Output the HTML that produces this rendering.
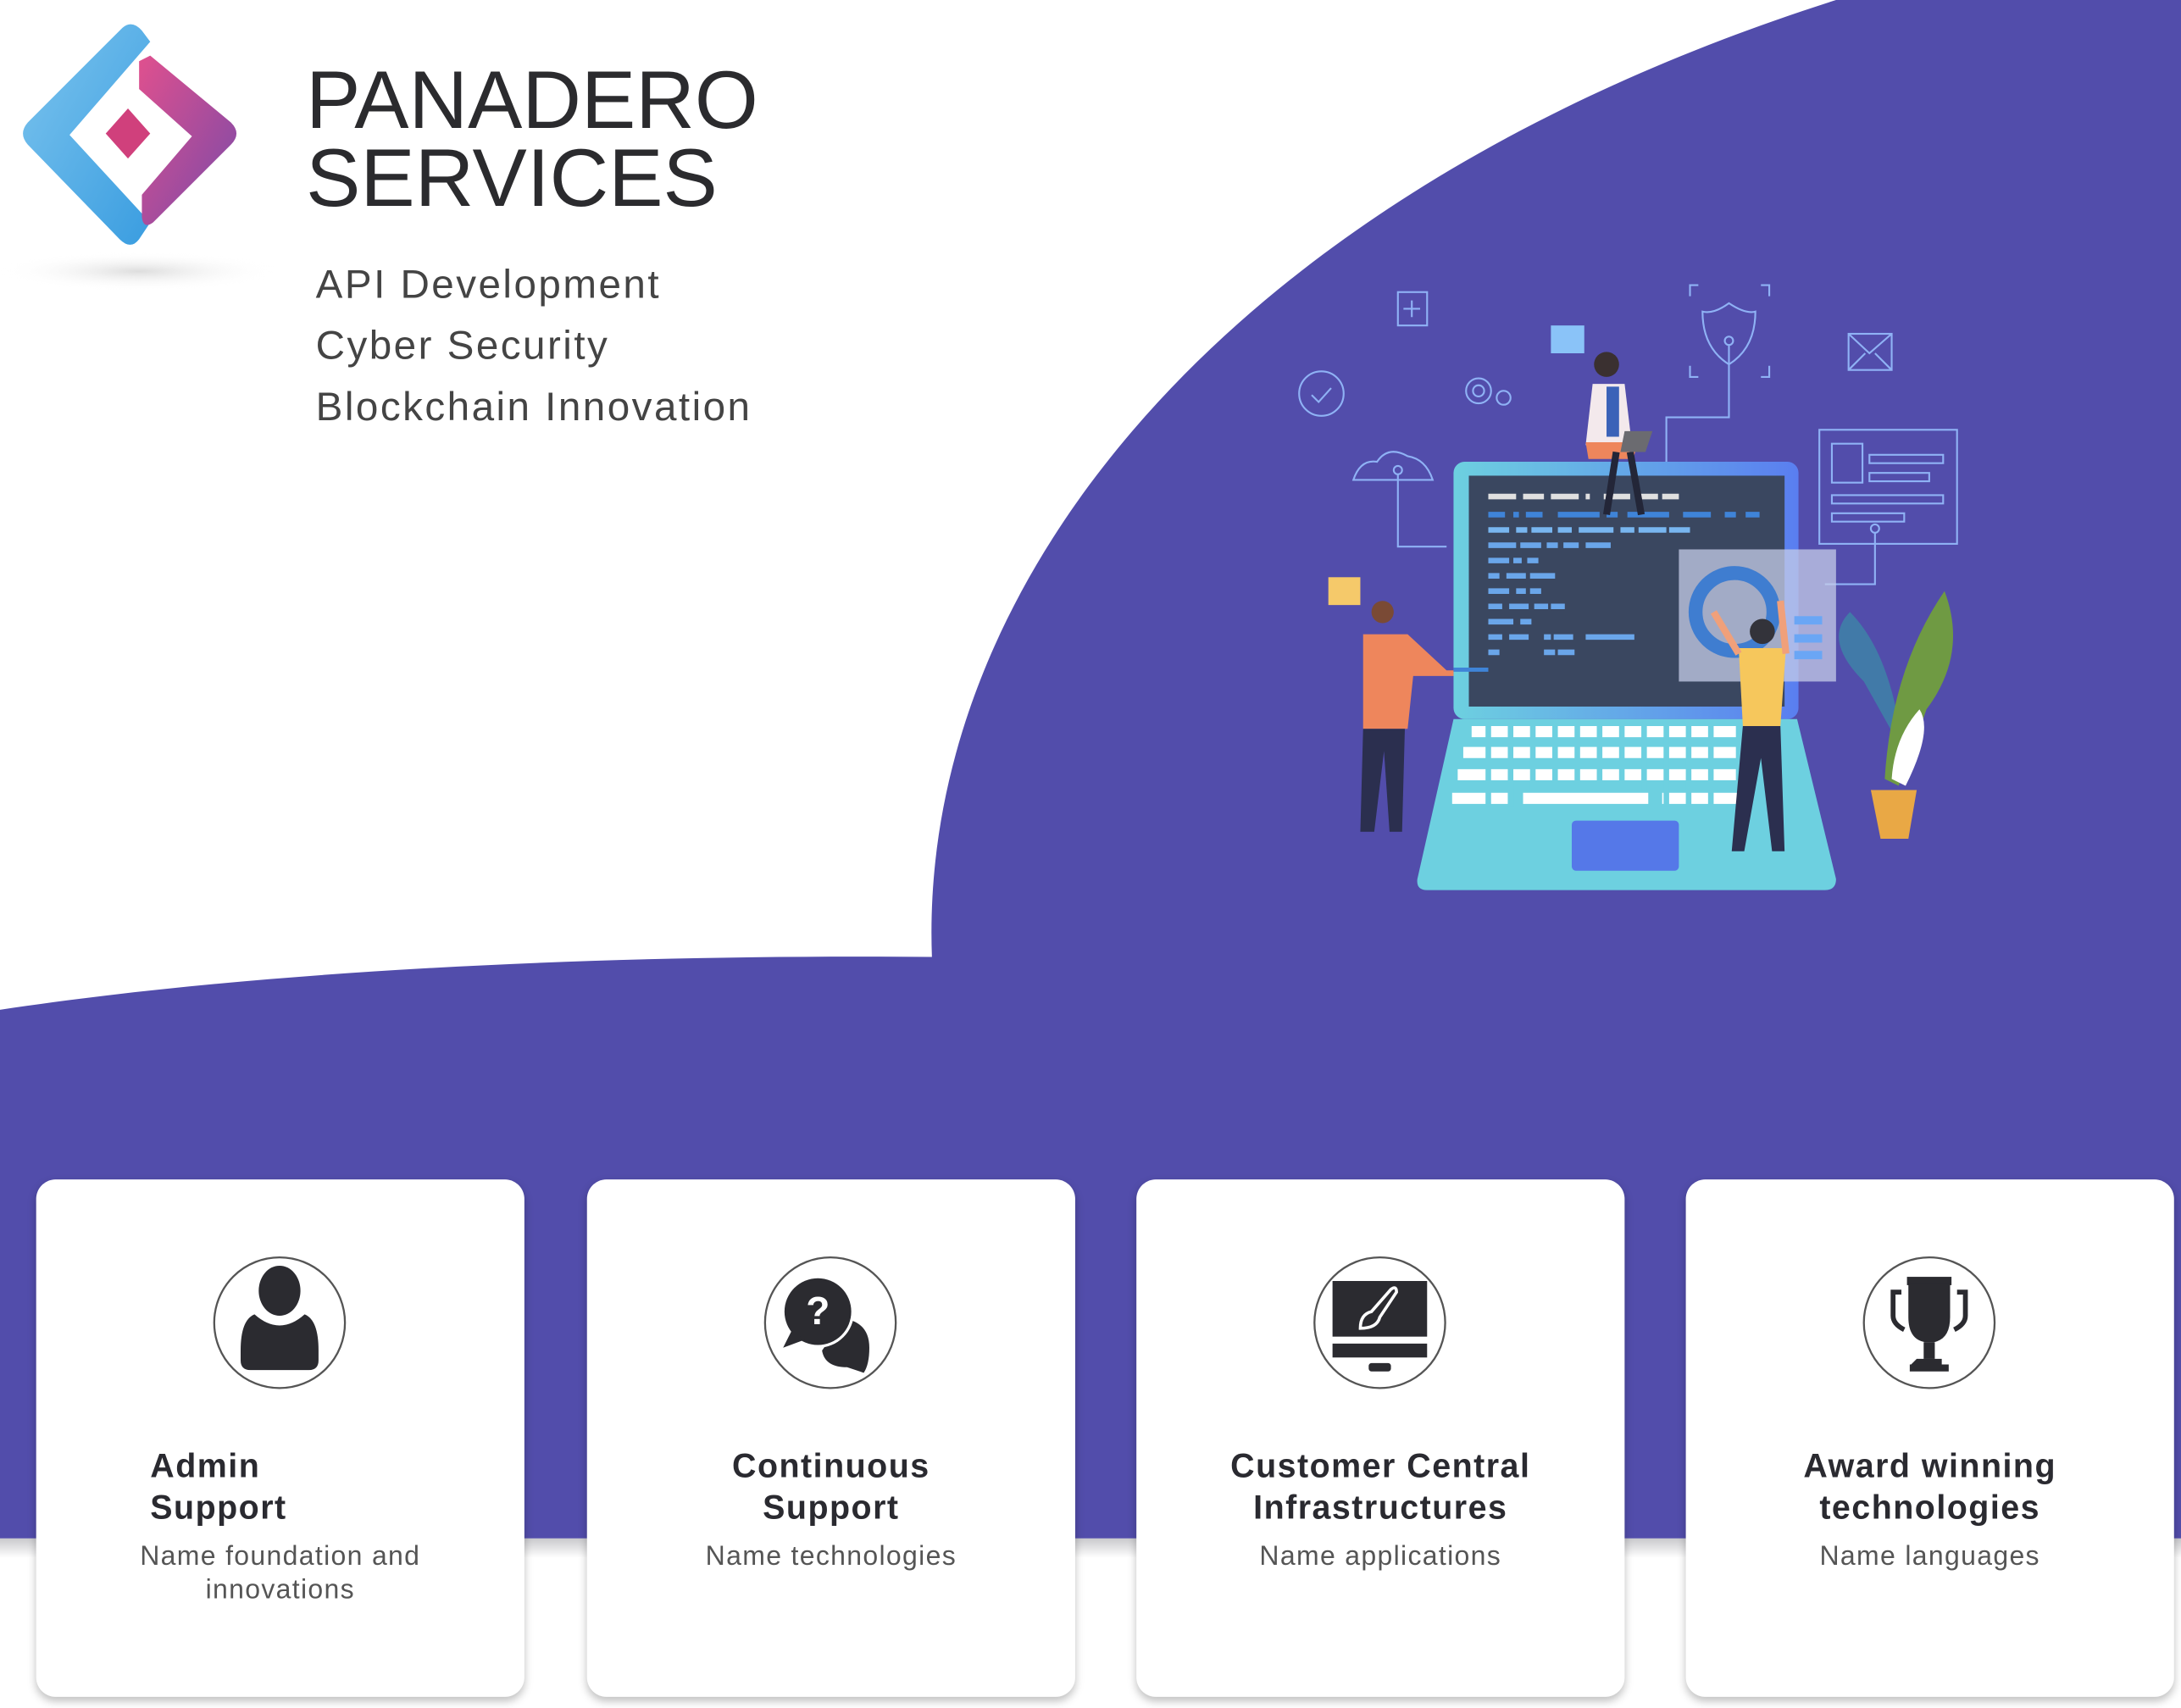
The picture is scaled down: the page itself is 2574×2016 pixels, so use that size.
<!DOCTYPE html>
<html><head><meta charset="utf-8"><style>
html,body{margin:0;padding:0;width:2574px;height:2016px;overflow:hidden;background:#fff;}
#w{position:absolute;left:0;top:0;width:1568px;height:1228px;transform:scale(1.64158,1.64169);transform-origin:0 0;font-family:"Liberation Sans",sans-serif;}
.card{position:absolute;top:848px;width:351px;height:372px;background:#fff;border-radius:14px;box-shadow:0 3px 6px rgba(0,0,0,.25);}
.card svg{position:absolute;left:127px;top:55px;}
.t{position:absolute;left:0;right:0;top:192px;text-align:center;font-weight:bold;font-size:24px;line-height:30px;color:#2a2a30;letter-spacing:0.9px;}
.s{position:absolute;left:0;right:0;top:259px;text-align:center;font-size:19.5px;line-height:24px;color:#555;letter-spacing:0.8px;}
.svc{position:absolute;left:227px;font-size:29px;color:#444;letter-spacing:1.5px;}
</style></head><body><div id="w">
<svg width="1568" height="1228" style="position:absolute;left:0;top:0">
<defs>
<linearGradient id="sh" x1="0" y1="0" x2="0" y2="1"><stop offset="0" stop-color="#c9c9cc"/><stop offset="1" stop-color="#fff"/></linearGradient>
<linearGradient id="bl" x1="0" y1="0" x2="1" y2="1"><stop offset="0" stop-color="#7cc4ee"/><stop offset="1" stop-color="#3a9de0"/></linearGradient>
<linearGradient id="pk" x1="0" y1="0" x2="1" y2="1"><stop offset="0" stop-color="#e0508e"/><stop offset="1" stop-color="#7a4aa8"/></linearGradient>
<linearGradient id="bz" x1="0" y1="0" x2="1" y2="0"><stop offset="0" stop-color="#6dd0e0"/><stop offset="1" stop-color="#5a7ef0"/></linearGradient>
<radialGradient id="ls" cx="0.5" cy="0.5" r="0.5"><stop offset="0" stop-color="#ddd"/><stop offset="1" stop-color="#fff" stop-opacity="0"/></radialGradient>
</defs>
<rect x="0" y="1106" width="1568" height="14" fill="url(#sh)"/>
<path d="M1320,0 H1568 V1106 H0 V726 C200,696 450,686 670,688 C660,420 880,140 1320,0 Z" fill="#524dab"/>
<ellipse cx="100" cy="195" rx="100" ry="14" fill="url(#ls)"/>
<path d="M88,20 Q95,14 102,22 L108,30 L50,97 L108,160 L100,172 Q94,180 86,172 L20,104 Q13,96 20,88 Z" fill="url(#bl)"/>
<path d="M100,44 L108,40 L166,88 Q174,96 166,104 L110,160 Q103,165 102,156 L102,140 L138,98 L100,64 Z" fill="url(#pk)"/>
<path d="M92,78 L108,96 L92,114 L76,96 Z" fill="#d0407c"/>
<g fill="none" stroke="#8fb2f5" stroke-width="1.3">
<rect x="1005" y="210" width="21" height="24"/><path d="M1015,216v12M1009,222h12"/>
<circle cx="950" cy="283" r="16"/><path d="M943,284l5,5 9,-10"/>
<circle cx="1063" cy="281" r="9"/><circle cx="1063" cy="281" r="4"/><circle cx="1081" cy="286" r="5"/>
<path d="M1215,213v-8h6M1272,213v-8h-6M1215,263v8h6M1272,263v8h-6"/>
<path d="M1243,218 Q1255,226 1262,224 Q1262,250 1243,262 Q1224,250 1224,224 Q1232,226 1243,218Z"/>
<circle cx="1243" cy="245" r="3"/><path d="M1243,248v52h-45v33"/>
<rect x="1329" y="240" width="31" height="26"/><path d="M1329,240l15,14 16,-14M1329,266l12,-12M1360,266l-12,-12"/>
<path d="M973,345 Q978,330 990,332 Q998,320 1012,328 Q1025,330 1030,345 Z"/><circle cx="1005" cy="338" r="3"/><path d="M1005,341v52h35"/>
<rect x="1308" y="309" width="99" height="82"/><rect x="1317" y="319" width="22" height="28"/><path d="M1344,327h53v6h-53zM1344,340h43v6h-43zM1317,356h80v6h-80zM1317,369h52v6h-52z"/>
<circle cx="1348" cy="380" r="3"/><path d="M1348,383v37h-36"/>
</g>
<rect x="1115" y="234" width="24" height="20" fill="#8ac3f8"/>
<rect x="955" y="415" width="23" height="20" fill="#f5c96a"/>
<rect x="1045" y="332" width="248" height="185" rx="8" fill="url(#bz)"/>
<rect x="1056" y="342" width="227" height="166" fill="#3a4760"/>
<g stroke-width="4">
<path d="M1070,357h20M1095,357h15M1115,357h20M1140,357h3M1153,357h19M1177,357h15M1195,357h12" stroke="#e0e0e0"/>
<path d="M1070,370h12M1088,370h4M1097,370h12M1120,370h30M1155,370h8M1170,370h30M1210,370h20M1240,370h8M1255,370h10" stroke="#3f84d8"/>
<path d="M1070,381h15M1090,381h8M1101,381h15M1120,381h10M1135,381h25M1165,381h10M1178,381h20M1200,381h15" stroke="#78b6f0"/>
<path d="M1070,392h20M1093,392h15M1112,392h8M1124,392h11M1140,392h18M1070,403h15M1088,403h6M1098,403h8M1070,414h8M1083,414h14M1100,414h18M1070,425h15M1090,425h7M1100,425h8M1070,436h10M1085,436h14M1103,436h10M1115,436h10M1070,447h18M1093,447h8M1070,458h10M1085,458h14M1110,458h5M1117,458h14M1140,458h35M1070,469h8M1110,469h8M1120,469h12" stroke="#6aa6ea"/>
</g>
<path d="M1045,517 H1292 L1320,632 Q1320,640 1312,640 H1026 Q1018,640 1019,632 Z" fill="#6dd0e0"/>
<g fill="#fff">
<path d="M1058,522h190v8h-190zM1052,537h196v8h-196zM1048,553h200v8h-200zM1044,570h40v8h-40zM1095,570h90v8h-90zM1195,570h55v8h-55z"/>
</g>
<g stroke="#6dd0e0" stroke-width="4"><path d="M1070,520v60M1086,520v60M1102,520v48M1118,520v48M1134,520v48M1150,520v48M1166,520v48M1182,520v48M1198,520v60M1214,520v60M1230,520v60"/></g>
<rect x="1130" y="590" width="77" height="36" rx="3" fill="#5578e8"/>
<rect x="1207" y="395" width="113" height="95" fill="#c6cce8" opacity="0.75"/>
<circle cx="1247" cy="440" r="28" fill="none" stroke="#3f7dd0" stroke-width="10"/>
<path d="M1290,443h20v6h-20zM1290,456h20v6h-20zM1290,468h20v6h-20z" fill="#6aa6f5"/>
<circle cx="994" cy="440" r="8" fill="#7a4a35"/>
<path d="M980,456 H1012 L1040,482 H1045 V486 L1016,486 L1012,524 H980 Z" fill="#ee865c"/>
<path d="M980,524 H1010 L1008,598 H999 L995,540 L988,598 H978 Z" fill="#2b2f4f"/>
<path d="M1045,480h25v3h-25z" fill="#3f84d8"/>
<circle cx="1267" cy="454" r="9" fill="#33333a"/>
<path d="M1250,466 H1284 L1280,522 H1253 Z" fill="#f6c75c"/>
<path d="M1250,470 L1232,440 M1284,470 L1280,432" stroke="#f0a07a" stroke-width="5"/>
<path d="M1253,522 H1280 L1283,612 H1274 L1266,545 L1254,612 H1245 Z" fill="#2b2f4f"/>
<circle cx="1155" cy="262" r="9" fill="#3a3030"/>
<path d="M1145,276 H1168 L1173,318 L1140,320 Z" fill="#f3e9ec"/>
<path d="M1155,278h9v36h-9z" fill="#3a62b8"/>
<path d="M1140,318 H1178 L1174,330 H1142 Z" fill="#ee865c"/>
<path d="M1162,325 L1155,370 M1172,325 L1180,370" stroke="#232638" stroke-width="5"/>
<path d="M1168,310 H1188 L1183,325 H1165Z" fill="#6b6b70"/>
<path d="M1340,490 Q1310,460 1330,440 Q1360,470 1368,540 Z" fill="#417aa8"/>
<path d="M1355,560 Q1360,480 1398,425 Q1415,470 1385,510 Q1375,540 1365,565Z" fill="#6f9a43"/>
<path d="M1360,560 Q1362,530 1380,510 Q1390,525 1370,565Z" fill="#fff"/>
<path d="M1345,568 H1378 L1372,603 H1352 Z" fill="#e9a845"/>
</svg>
<div style="position:absolute;left:220px;top:44px;font-size:59px;line-height:56px;color:#2b2b2e;letter-spacing:0px;transform:scaleX(0.995);transform-origin:0 0;">PANADERO<br>SERVICES</div>
<div class="svc" style="top:189px">API Development</div>
<div class="svc" style="top:233px">Cyber Security</div>
<div class="svc" style="top:277px">Blockchain Innovation</div>

<div class="card" style="left:26px">
<svg width="96" height="96" viewBox="-48 -48 96 96"><ellipse cx="0" cy="0" rx="47" ry="47" fill="#fff" stroke="#555" stroke-width="1.4"/>
<ellipse cx="0" cy="-23" rx="15" ry="18" fill="#2b2b30"/><path d="M-18,-6 Q0,10 18,-6 Q28,-2 28,20 V27 Q28,34 21,34 H-21 Q-28,34 -28,27 V20 Q-28,-2 -18,-6Z" fill="#2b2b30"/></svg>
<div class="t" style="text-align:left;left:82px">Admin<br>Support</div>
<div class="s">Name foundation and<br>innovations</div></div>

<div class="card" style="left:422px">
<svg width="96" height="96" viewBox="-48 -48 96 96"><ellipse cx="0" cy="0" rx="47" ry="47" fill="#fff" stroke="#555" stroke-width="1.4"/>
<path d="M10,-3 Q28,0 28,18 Q28,30 24,36 L12,32 Q-4,32 -6,20Z" fill="#2b2b30"/>
<circle cx="-9" cy="-8" r="26" fill="#fff"/><circle cx="-9" cy="-8" r="24" fill="#2b2b30"/><path d="M-28,6 L-34,18 L-18,12Z" fill="#2b2b30"/>
<text x="-9" y="1" font-size="28" font-weight="bold" fill="#fff" text-anchor="middle" font-family="Liberation Sans">?</text></svg>
<div class="t">Continuous<br>Support</div>
<div class="s">Name technologies</div></div>

<div class="card" style="left:817px">
<svg width="96" height="96" viewBox="-48 -48 96 96"><ellipse cx="0" cy="0" rx="47" ry="47" fill="#fff" stroke="#555" stroke-width="1.4"/>
<rect x="-34" y="-30" width="68" height="40" fill="#2b2b30"/><rect x="-34" y="15" width="68" height="10" fill="#2b2b30"/><rect x="-8" y="29" width="16" height="6" rx="2" fill="#2b2b30"/>
<path d="M-14,4 Q-14,-6 -6,-8 L8,-24 Q12,-27 12,-22 L0,-4 Q-2,4 -14,4Z" fill="none" stroke="#fff" stroke-width="2.2"/></svg>
<div class="t">Customer Central<br>Infrastructures</div>
<div class="s">Name applications</div></div>

<div class="card" style="left:1212px">
<svg width="96" height="96" viewBox="-48 -48 96 96"><ellipse cx="0" cy="0" rx="47" ry="47" fill="#fff" stroke="#555" stroke-width="1.4"/>
<rect x="-16" y="-33" width="32" height="6" fill="#2b2b30"/><path d="M-15,-28 H15 V-4 Q15,12 3,14 H-3 Q-15,12 -15,-4Z" fill="#2b2b30"/>
<path d="M-20,-22 H-26 V-5 Q-26,1 -18,5 M20,-22 H26 V-5 Q26,1 18,5" fill="none" stroke="#2b2b30" stroke-width="3.5"/>
<rect x="-4" y="14" width="8" height="12" fill="#2b2b30"/><path d="M-9,26 H9 V34 H-14 V31Z M-14,30 H14 V35 H-14Z" fill="#2b2b30"/></svg>
<div class="t">Award winning<br>technologies</div>
<div class="s">Name languages</div></div>
</div></body></html>
